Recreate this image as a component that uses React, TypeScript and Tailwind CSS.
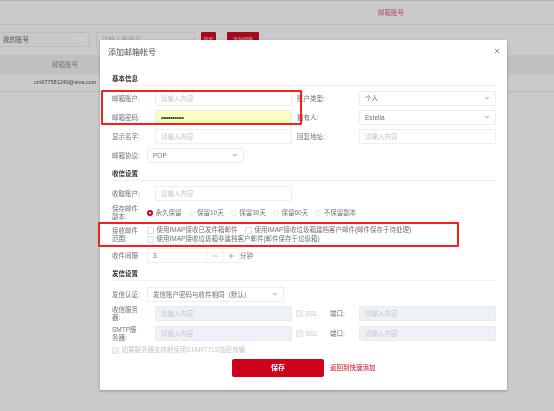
import React from "react";
import { X, Minus, Plus } from "lucide-react";

const boxBase = "h-[15px] rounded-[1px] border flex items-center px-[5px] text-[6.5px] shrink-0";

function Caret() {
  return (
    <svg width="6" height="3" viewBox="0 0 6 3" className="ml-auto shrink-0">
      <polygon points="0,0 6,0 3,3" fill="#d0d3d8" />
    </svg>
  );
}

function TextBox({ className = "", disabled = false }: { className?: string; disabled?: boolean }) {
  return (
    <div
      className={`${boxBase} w-[137px] ${
        disabled ? "bg-[#eef1f5] border-[#e8ebf0] text-[#c6cad1]" : "bg-white border-[#eceef2] text-[#c0c4cc]"
      } ${className}`}
    >
      请输入内容
    </div>
  );
}

function SelectBox({ value, className = "" }: { value: string; className?: string }) {
  return (
    <div className={`${boxBase} bg-white border-[#eceef2] text-[#6e7178] ${className}`}>
      <span>{value}</span>
      <Caret />
    </div>
  );
}

function Label({ children, className = "" }: { children: React.ReactNode; className?: string }) {
  return <div className={`text-[6.5px] leading-[8px] text-[#6e7178] shrink-0 ${className}`}>{children}</div>;
}

function Heading({ title, className = "" }: { title: string; className?: string }) {
  return (
    <div className={`h-[13px] border-b border-[#eff1f3] text-[6.5px] leading-[12px] font-bold text-[#303133] ${className}`}>
      {title}
    </div>
  );
}

function Radio({ label, checked = false }: { label: string; checked?: boolean }) {
  return (
    <div className="flex items-center gap-[2.5px] text-[6.5px] text-[#6e7178]">
      <span
        className={`w-[6px] h-[6px] rounded-full bg-white ${
          checked ? "border-2 border-[#d0021b]" : "border border-[#e6e8ec]"
        }`}
      />
      {label}
    </div>
  );
}

function Check({ label, disabled = false, className = "" }: { label: string; disabled?: boolean; className?: string }) {
  return (
    <div className={`flex items-center gap-[2.5px] text-[6.5px] leading-[8px] text-[#6e7178] ${className}`}>
      <span
        className={`w-[7px] h-[7px] rounded-[1px] border shrink-0 ${
          disabled ? "bg-[#edf2fc] border-[#dfe2e8]" : "bg-white border-[#dcdfe4]"
        }`}
      />
      <span className={disabled ? "text-[#c0c4cc]" : ""}>{label}</span>
    </div>
  );
}

function Dialog() {
  return (
    <div className="absolute left-[100px] top-[40px] w-[407px] h-[350px] bg-white rounded-[1px] shadow-[0_1px_3px_rgba(0,0,0,0.3)] pl-[12px] pr-[11px]">
      <div className="h-[26px] -ml-[4px] flex items-center text-[8px] text-[#4a4d52]">添加邮箱帐号</div>
      <X className="absolute right-[6px] top-[7px] w-[8px] h-[8px] text-[#7d828a]" strokeWidth={2.5} />

      <Heading title="基本信息" className="mt-[7px]" />
      <div className="mt-[5px] flex flex-col gap-[4px]">
        <div className="flex items-center">
          <Label className="w-[43px]">邮箱账户:</Label>
          <TextBox />
          <Label className="w-[62px] ml-[5px]">账户类型:</Label>
          <SelectBox value="个人" className="w-[137px]" />
        </div>
        <div className="flex items-center">
          <Label className="w-[43px]">邮箱密码:</Label>
          <div className={`${boxBase} w-[137px] bg-[#fbffbd] border-[#eceef2] text-[#303133] tracking-[-0.4px]`}>
            ••••••••••••
          </div>
          <Label className="w-[62px] ml-[5px]">拥有人:</Label>
          <SelectBox value="Estella" className="w-[137px]" />
        </div>
        <div className="flex items-center">
          <Label className="w-[43px]">显示名字:</Label>
          <TextBox />
          <Label className="w-[62px] ml-[5px]">回复地址:</Label>
          <TextBox />
        </div>
        <div className="flex items-center">
          <Label className="w-[35px]">邮箱协议:</Label>
          <SelectBox value="POP" className="w-[97px]" />
        </div>
      </div>

      <Heading title="收信设置" className="mt-[5px]" />
      <div className="mt-[5px] flex items-center">
        <Label className="w-[43px]">收取账户:</Label>
        <TextBox />
      </div>
      <div className="mt-[4px] h-[16px] flex items-center">
        <Label className="w-[35px]">
          保存邮件
          <br />
          副本:
        </Label>
        <div className="flex items-center gap-[7px]">
          <Radio label="永久保留" checked />
          <Radio label="保留10天" />
          <Radio label="保留30天" />
          <Radio label="保留60天" />
          <Radio label="不保留副本" />
        </div>
      </div>
      <div className="mt-[5px] h-[17px] flex items-center">
        <Label className="w-[35px]">
          接收邮件
          <br />
          范围:
        </Label>
        <div className="flex flex-col gap-[1px]">
          <div className="flex items-center">
            <Check label="使用IMAP接收已发件箱邮件" className="w-[98px]" />
            <Check label="使用IMAP接收垃圾箱建档客户邮件(邮件保存于待处理)" />
          </div>
          <Check label="使用IMAP接收垃圾箱非建档客户邮件(邮件保存于垃圾箱)" />
        </div>
      </div>
      <div className="mt-[5px] flex items-center">
        <Label className="w-[35px]">收件间隔</Label>
        <div className="h-[15px] w-[92px] flex items-stretch rounded-[1px] border border-[#eceef2] text-[6.5px] text-[#6e7178]">
          <div className="w-[58px] flex items-center pl-[5px]">3</div>
          <div className="flex-1 flex items-center justify-center border-l border-[#eceef2]">
            <Minus className="w-[8px] h-[8px] text-[#b4b8c0]" strokeWidth={2.5} />
          </div>
          <div className="flex-1 flex items-center justify-center border-l border-[#eceef2]">
            <Plus className="w-[8px] h-[8px] text-[#9a9fa8]" strokeWidth={2.5} />
          </div>
        </div>
        <Label className="ml-[1px]">分钟</Label>
      </div>

      <Heading title="发信设置" className="mt-[5px]" />
      <div className="mt-[6px] flex items-center">
        <Label className="w-[35px]">发信认证:</Label>
        <SelectBox value="发信账户密码与收件相同（默认）" className="w-[137px]" />
      </div>
      <div className="mt-[4px] h-[15px] flex items-center">
        <Label className="w-[43px]">
          收信服务
          <br />
          器:
        </Label>
        <TextBox disabled />
        <Check label="SSL" disabled className="w-[34px] ml-[4px]" />
        <Label className="w-[29px]">端口:</Label>
        <TextBox disabled />
      </div>
      <div className="mt-[5px] h-[15px] flex items-center">
        <Label className="w-[43px]">
          SMTP服
          <br />
          务器:
        </Label>
        <TextBox disabled />
        <Check label="SSL" disabled className="w-[34px] ml-[4px]" />
        <Label className="w-[29px]">端口:</Label>
        <TextBox disabled />
      </div>
      <Check label="如果服务器支持就使用STARTTLS加密传输" disabled className="mt-[5px]" />
      <div className="mt-[5px] flex items-center">
        <button className="ml-[120px] w-[92px] h-[18px] rounded-[2px] bg-[#d0021b] text-white text-[7px] font-bold">保存</button>
        <span className="ml-[6px] text-[6.5px] text-[#d0021b]">返回到快速添加</span>
      </div>
    </div>
  );
}

export default function App() {
  return (
    <div
      className="relative w-[554px] h-[411px] overflow-hidden bg-[#cacaca] blur-[0.4px]"
      style={{ fontFamily: '"Liberation Sans", "Noto Sans CJK SC", sans-serif' }}
    >
      <div className="h-[25px] border-t border-b border-t-[#b4b4b4] border-b-[#bcbcbc] flex items-center justify-end pr-[150px] text-[6.5px] text-[#b3475a]">
        邮箱账号
      </div>
      <div className="mt-[7px] h-[15px] flex items-center text-[6.5px]">
        <div className="w-[90px] h-[15px] border border-[#bdbdbd] border-l-0 flex items-center pl-[3px] pr-[5px] text-[#555]">
          我的账号
          <Caret />
        </div>
        <div className="ml-[6px] w-[99px] h-[15px] border border-[#bdbdbd] flex items-center pl-[5px] text-[#9c9c9c]">请输入邮箱名</div>
        <div className="ml-[6px] w-[15px] h-[15px] rounded-[1px] bg-[#a50a1c] text-[#d8b0b4] flex items-center justify-center text-[5px]">搜索</div>
        <div className="ml-[11px] w-[32px] h-[15px] rounded-[1px] bg-[#a50a1c] text-[#d8b0b4] flex items-center justify-center text-[5px]">添加邮箱</div>
      </div>
      <div className="mt-[8px] h-[19px] bg-[#bfc2c2] flex items-center pl-[52px] text-[6.5px] text-[#777]">邮箱账号</div>
      <div className="h-[18px] border-b border-[#bcbcbc] flex items-center pl-[34px] text-[5.5px] text-[#444]">cm977581240@sina.com</div>

      <Dialog />

      <div className="absolute left-[101px] top-[90px] w-[201px] h-[35px] border-2 border-[#f5211a] rounded-[1px]" />
      <div className="absolute left-[98px] top-[222px] w-[361px] h-[25px] border-2 border-[#f5211a] rounded-[1px]" />
    </div>
  );
}
